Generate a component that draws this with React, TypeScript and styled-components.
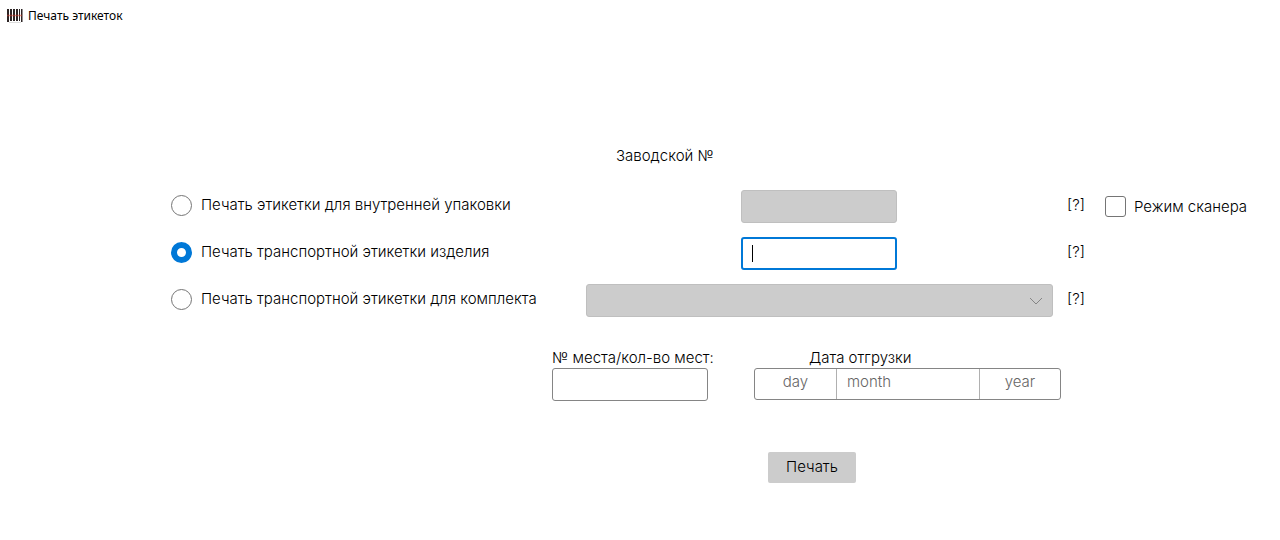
import React, { useState } from "react";
import styled, { createGlobalStyle, css } from "styled-components";

const GlobalStyle = createGlobalStyle`
  *, *::before, *::after { box-sizing: border-box; }
  body {
    margin: 0;
    background: #fff;
    color: #000;
    font: 300 15px/20px Inter, "Liberation Sans", sans-serif;
  }
  input, select, button { font: inherit; color: inherit; margin: 0; }
`;

const TitleBar = styled.header`
  display: flex;
  align-items: center;
  gap: 5px;
  height: 32px;
  padding: 0 7px;
  font: 12px/16px "Noto Sans", "Open Sans", sans-serif;
  color: #000;
`;

const Title = styled.h1`
  margin: 0;
  font: inherit;
`;

const Form = styled.form`
  padding: 114px 34px 40px 171px;
`;

const Options = styled.div`
  display: grid;
  grid-template-columns: minmax(0, 1fr) 467px 24px 141px;
  column-gap: 14px;
  row-gap: 14px;
  align-items: center;
`;

const FieldHeading = styled.div`
  grid-column: 2 / -1;
  padding: 0 30px 10px;
`;

const Choice = styled.label`
  grid-column: 1;
  display: flex;
  align-items: center;
  gap: 9px;
  padding-bottom: 3px;
  white-space: nowrap;
`;

const Radio = styled.input`
  appearance: none;
  flex: none;
  width: 21px;
  height: 21px;
  border: 1px solid #757575;
  border-radius: 50%;
  background: #fff;
  outline: none;
  &:checked { border: 6px solid #0078d7; }
`;

const Checkbox = styled.input`
  appearance: none;
  flex: none;
  width: 21px;
  height: 21px;
  border: 1px solid #757575;
  border-radius: 3px;
  background: #fff;
  &:checked { background: #0078d7; }
`;

const ScannerMode = styled.label`
  display: flex;
  align-items: center;
  gap: 8px;
  white-space: nowrap;
`;

const fieldBox = css`
  height: 33px;
  border: 1px solid #858585;
  border-radius: 3px;
  background: #fff;
  outline: none;
  &:disabled { background: #ccc; border-color: #bfbfbf; opacity: 1; }
`;

const TextField = styled.input`
  ${fieldBox}
  display: block;
  width: 156px;
  padding: 0 10px;
`;

const SerialField = styled(TextField)<{ $active: boolean }>`
  ${(p) => p.$active && css`border: 2px solid #0078d7; caret-color: transparent;`}
`;

const SerialCell = styled.div<{ $caret: boolean }>`
  position: relative;
  justify-self: end;
  margin-right: 156px;
  ${(p) => p.$caret && css`
    &::after {
      content: "";
      position: absolute;
      left: 11px;
      top: 8px;
      width: 1px;
      height: 17px;
      background: #000;
    }
  `}
`;

const SelectCell = styled.div`
  position: relative;
  svg {
    position: absolute;
    right: 10px;
    top: 13px;
    pointer-events: none;
  }
`;

const Select = styled.select`
  ${fieldBox}
  appearance: none;
  display: block;
  width: 100%;
  padding: 0 32px 0 10px;
`;

const Help = styled.button`
  justify-self: start;
  padding: 0 0 3px;
  border: 0;
  background: none;
`;

const Details = styled.div`
  display: flex;
  justify-content: flex-end;
  align-items: flex-start;
  gap: 46px;
  margin: 31px 185px 0 0;
`;

const Places = styled.label`
  width: 156px;
  white-space: nowrap;
`;

const DateGroup = styled.fieldset`
  min-width: 0;
  margin: 0;
  padding: 0;
  border: 0;
`;

const Legend = styled.legend`
  padding: 0 55px;
`;

const DateBox = styled.div`
  display: grid;
  grid-template-columns: 81px 143px 81px;
  width: 307px;
  height: 32px;
  border: 1px solid #858585;
  border-radius: 3px;
`;

const DatePart = styled.input<{ $left?: boolean }>`
  min-width: 0;
  height: 30px;
  padding: 0 10px 6px;
  border: 0;
  border-left: 1px solid #b0b0b0;
  background: none;
  outline: none;
  text-align: ${(p) => (p.$left ? "left" : "center")};
  &:first-child { border-left: 0; }
  &::placeholder { color: #666; opacity: 1; }
`;

const Actions = styled.div`
  display: flex;
  justify-content: flex-end;
  margin: 51px 390px 0 0;
`;

const PrintButton = styled.button`
  width: 88px;
  height: 31px;
  padding: 0 3px 2px;
  border: 0;
  border-radius: 2px;
  background: #ccc;
`;

const BarcodeIcon = () => (
  <svg width="16" height="16" viewBox="0 0 16 16" aria-hidden="true">
    <path
      d="M0 1h2v13H0zM3 1h2v12H3zM6 1h2v12H6zM9 1h2v12H9zM12 1h1v12h-1zM14 1h1.5v13H14z"
      fill="#2c2424"
    />
    <path d="M0 7.5h15" stroke="#d8402f" strokeWidth="1.5" opacity=".5" />
    <path d="M2 14.5h12" stroke="#ddd" strokeWidth="1" />
  </svg>
);

const Chevron = () => (
  <svg width="14" height="8" viewBox="0 0 14 8" fill="none" aria-hidden="true">
    <path d="M1 1l6 6 6-6" stroke="#858585" />
  </svg>
);

type Mode = "inner" | "transport" | "kit";

export default function App() {
  const [mode, setMode] = useState<Mode>("transport");
  const radio = (value: Mode) => (
    <Radio type="radio" name="mode" checked={mode === value} onChange={() => setMode(value)} />
  );

  return (
    <>
      <GlobalStyle />
      <TitleBar>
        <BarcodeIcon />
        <Title>Печать этикеток</Title>
      </TitleBar>
      <Form onSubmit={(e) => e.preventDefault()}>
        <Options>
          <FieldHeading>Заводской №</FieldHeading>

          <Choice>{radio("inner")}Печать этикетки для внутренней упаковки</Choice>
          <SerialCell $caret={mode === "inner"}>
            <SerialField aria-label="Заводской № для внутренней упаковки" $active={mode === "inner"} disabled={mode !== "inner"} />
          </SerialCell>
          <Help type="button">[?]</Help>
          <ScannerMode>
            <Checkbox type="checkbox" />Режим сканера
          </ScannerMode>

          <Choice>{radio("transport")}Печать транспортной этикетки изделия</Choice>
          <SerialCell $caret={mode === "transport"}>
            <SerialField aria-label="Заводской № изделия" $active={mode === "transport"} disabled={mode !== "transport"} />
          </SerialCell>
          <Help type="button">[?]</Help>

          <Choice>{radio("kit")}Печать транспортной этикетки для комплекта</Choice>
          <SelectCell>
            <Select aria-label="Комплект" disabled={mode !== "kit"} />
            <Chevron />
          </SelectCell>
          <Help type="button">[?]</Help>
        </Options>

        <Details>
          <Places>
            № места/кол-во мест:
            <TextField />
          </Places>
          <DateGroup>
            <Legend>Дата отгрузки</Legend>
            <DateBox>
              <DatePart aria-label="День" placeholder="day" />
              <DatePart aria-label="Месяц" placeholder="month" $left />
              <DatePart aria-label="Год" placeholder="year" />
            </DateBox>
          </DateGroup>
        </Details>

        <Actions>
          <PrintButton type="submit">Печать</PrintButton>
        </Actions>
      </Form>
    </>
  );
}
